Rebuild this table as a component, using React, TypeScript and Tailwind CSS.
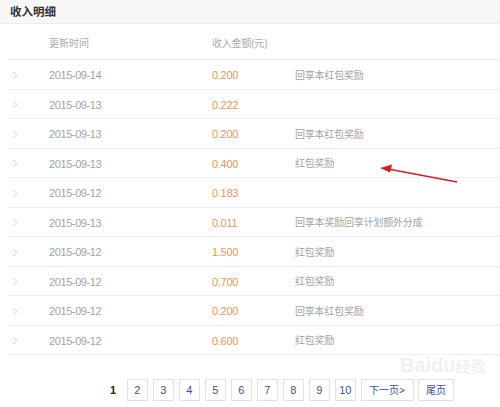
import React from "react";

const rows = [
  { date: "2015-09-14", amount: "0.200", note: "回享本红包奖励" },
  { date: "2015-09-13", amount: "0.222", note: "" },
  { date: "2015-09-13", amount: "0.200", note: "回享本红包奖励" },
  { date: "2015-09-13", amount: "0.400", note: "红包奖励" },
  { date: "2015-09-12", amount: "0.183", note: "" },
  { date: "2015-09-13", amount: "0.011", note: "回享本奖励回享计划额外分成" },
  { date: "2015-09-12", amount: "1.500", note: "红包奖励" },
  { date: "2015-09-12", amount: "0.700", note: "红包奖励" },
  { date: "2015-09-12", amount: "0.200", note: "回享本红包奖励" },
  { date: "2015-09-12", amount: "0.600", note: "红包奖励" },
];

const pages = ["2", "3", "4", "5", "6", "7", "8", "9", "10"];

const Chevron = () => (
  <svg width="6" height="9" viewBox="0 0 6 9" className="text-[#d4d4d4]">
    <polyline points="1,1 5,4.5 1,8" fill="none" stroke="currentColor" strokeWidth="1" />
  </svg>
);

const App = () => {
  return (
    <div
      className="relative w-[500px] h-[407px] bg-white overflow-hidden text-[11px]"
      style={{ fontFamily: '"Liberation Sans", Arial, "Noto Sans CJK SC", sans-serif' }}
    >
      {/* Title bar */}
      <div className="h-[24px] bg-[#f7f7f7] border-b border-[#ececec] pl-[10px] pt-[3px] flex items-center">
        <span className="font-bold text-[#333] text-[11.5px]">收入明细</span>
      </div>

      {/* Table */}
      <div className="ml-[8px]">
        <div className="h-[36px] pt-[3px] flex items-center border-b border-[#ececec] text-[#aaa] text-[10px]">
          <span className="ml-[41px] w-[163px]">更新时间</span>
          <span className="tracking-[-0.2px]">收入金额(元)</span>
        </div>
        {rows.map((r, i) => (
          <div
            key={i}
            className="h-[29.5px] pt-[2px] flex items-center border-b border-[#efefef]"
          >
            <span className="ml-[4px] w-[37px] flex">
              <Chevron />
            </span>
            <span className="w-[163px] text-[#a3a3a3] tracking-[-0.4px]">{r.date}</span>
            <span className="w-[83px] text-[#f0915a] tracking-[-0.3px]">{r.amount}</span>
            <span className="text-[#a3a3a3] text-[10px] tracking-[-0.2px]">{r.note}</span>
          </div>
        ))}
      </div>

      {/* Pagination */}
      <div className="mt-[24px] pl-[110px] flex items-center gap-[4.5px] text-[11px]">
        <span className="w-[8px] font-bold text-[#222] mr-[4px]">1</span>
        {pages.map((p) => (
          <span
            key={p}
            className="h-[22px] w-[21.5px] border border-[#e2e2e2] flex items-center justify-center text-[#3b4fa0]"
          >
            {p}
          </span>
        ))}
        <span className="h-[22px] w-[53px] border border-[#e2e2e2] flex items-center justify-center text-[#3b4fa0] text-[10px]">
          下一页&gt;
        </span>
        <span className="h-[22px] w-[36px] border border-[#e2e2e2] flex items-center justify-center text-[#3b4fa0] text-[10px]">
          尾页
        </span>
      </div>

      {/* Watermark */}
      <div className="absolute left-[400px] top-[355px] text-[20px] font-bold text-[#f0f0f0] leading-none select-none">
        Baidu<span className="text-[15px]">经验</span>
      </div>

      {/* Red annotation arrow */}
      <svg className="absolute left-0 top-0" width="500" height="407">
        <line x1="457" y1="182" x2="388" y2="169" stroke="#d42020" strokeWidth="1.6" />
        <polygon points="380,168 392,164.5 390,172.5" fill="#d42020" />
      </svg>
    </div>
  );
};

export default App;
